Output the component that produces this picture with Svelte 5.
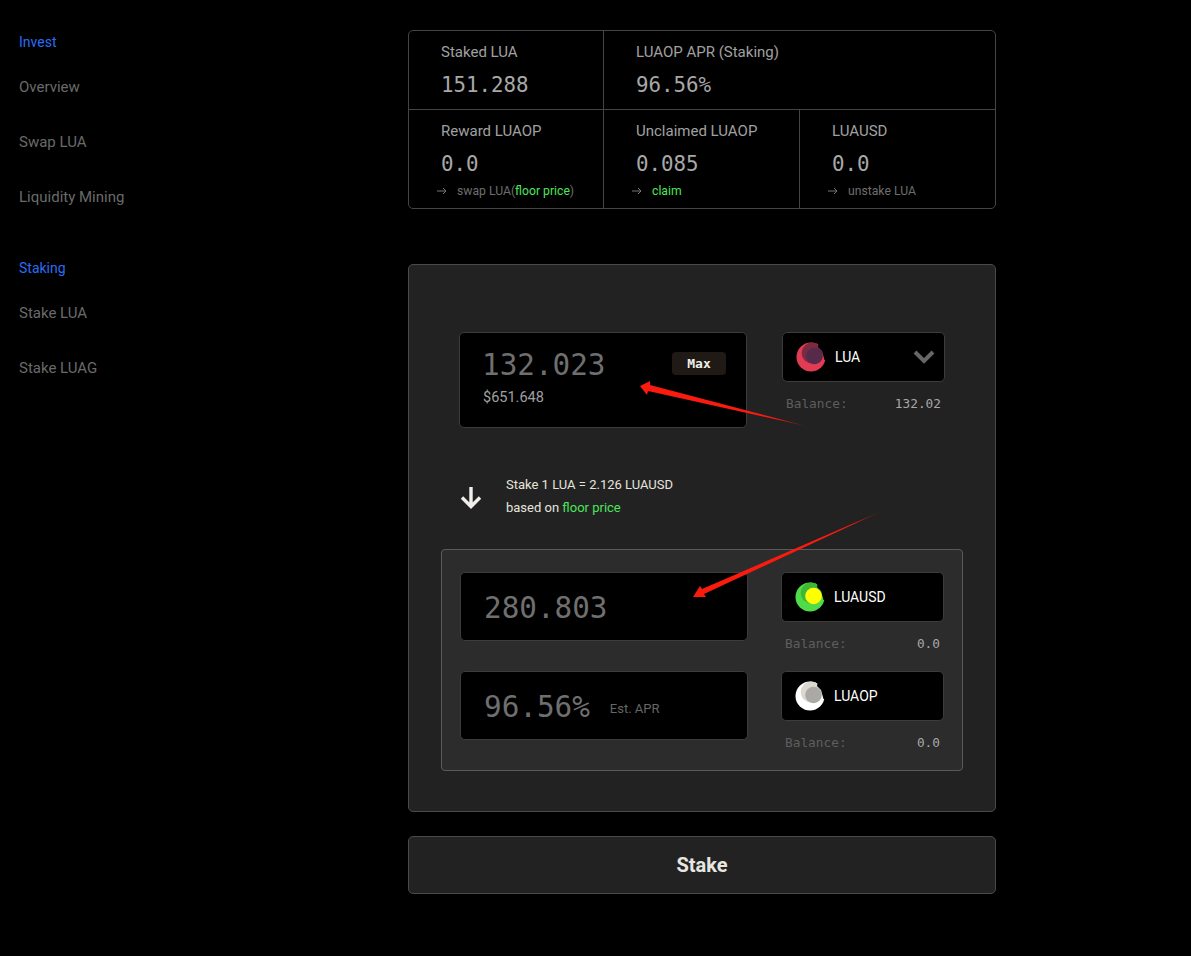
<script lang="ts">
  const sideGroups = [
    { title: 'Invest', links: ['Overview', 'Swap LUA', 'Liquidity Mining'] },
    { title: 'Staking', links: ['Stake LUA', 'Stake LUAG'] }
  ];
</script>

{#snippet coin(outer: string, top: string, inner: string)}
  <svg class="coin" width="30" height="30" viewBox="0 0 30 30">
    <circle cx="15" cy="15" r="14.5" fill={outer} />
    <circle cx="16" cy="11" r="10.4" fill={top} />
    <path d="M23 0 L30 0 L30 18 L28.5 18 L26 9 L22 5 Z" fill="#000" />
    <circle cx="18.5" cy="14" r="8.3" fill={inner} />
  </svg>
{/snippet}

{#snippet arrow()}
  <svg class="arr" width="10" height="8" viewBox="0 0 10 8">
    <path d="M0 4 H9 M6 1 L9 4 L6 7" fill="none" stroke="#777" stroke-width="1" />
  </svg>
{/snippet}

<div class="page">
  <nav class="side">
    {#each sideGroups as group}
      <div class="group">
        <div class="group-title">{group.title}</div>
        {#each group.links as link}
          <div class="side-link">{link}</div>
        {/each}
      </div>
    {/each}
  </nav>

  <main class="main">
    <section class="stats">
      <div class="stat wide-left">
        <div class="stat-label">Staked LUA</div>
        <div class="stat-value">151.288</div>
      </div>
      <div class="stat wide-right">
        <div class="stat-label">LUAOP APR (Staking)</div>
        <div class="stat-value">96.56%</div>
      </div>
      <div class="stat">
        <div class="stat-label">Reward LUAOP</div>
        <div class="stat-value">0.0</div>
        <div class="stat-link">{@render arrow()}swap LUA(<span class="green">floor price</span>)</div>
      </div>
      <div class="stat">
        <div class="stat-label">Unclaimed LUAOP</div>
        <div class="stat-value">0.085</div>
        <div class="stat-link">{@render arrow()}<span class="green">claim</span></div>
      </div>
      <div class="stat last">
        <div class="stat-label">LUAUSD</div>
        <div class="stat-value">0.0</div>
        <div class="stat-link">{@render arrow()}unstake LUA</div>
      </div>
    </section>

    <section class="panel">
      <div class="row from">
        <div class="input big">
          <div class="input-main">
            <span class="amount">132.023</span>
            <span class="max">Max</span>
          </div>
          <div class="usd">$651.648</div>
        </div>
        <div class="token-col">
          <div class="token">
            {@render coin('#e23c55', '#7c2a42', '#552a4a')}
            <span>LUA</span>
            <svg class="chev" width="22" height="14" viewBox="0 0 22 14">
              <path d="M2 2 L11 11 L20 2" fill="none" stroke="#666" stroke-width="4" />
            </svg>
          </div>
          <div class="balance"><span>Balance:</span><span class="bal-val">132.02</span></div>
        </div>
      </div>

      <div class="rate">
        <svg class="down" width="24" height="24" viewBox="0 0 24 24">
          <path d="M12 2 V21 M3 12.5 L12 21.5 L21 12.5" fill="none" stroke="#f0eeea" stroke-width="3.4" />
        </svg>
        <div class="rate-text">
          <div>Stake 1 LUA = 2.126 LUAUSD</div>
          <div>based on <span class="green">floor price</span></div>
        </div>
      </div>

      <div class="out">
        <div class="row">
          <div class="input small"><span class="amount">280.803</span></div>
          <div class="token-col">
            <div class="token">
              {@render coin('#4fdc48', '#3fb838', '#ffff00')}
              <span>LUAUSD</span>
            </div>
            <div class="balance"><span>Balance:</span><span class="bal-val">0.0</span></div>
          </div>
        </div>
        <div class="row">
          <div class="input small">
            <span class="amount">96.56%</span>
            <span class="est">Est. APR</span>
          </div>
          <div class="token-col">
            <div class="token">
              {@render coin('#ffffff', '#dcd8d0', '#aaa9a6')}
              <span>LUAOP</span>
            </div>
            <div class="balance"><span>Balance:</span><span class="bal-val">0.0</span></div>
          </div>
        </div>
      </div>
    </section>

    <button class="stake">Stake</button>
  </main>

  <!-- red annotation arrows pasted on top of the screenshot -->
  <svg class="marks" width="1191" height="956" viewBox="0 0 1191 956">
    <defs>
      <linearGradient id="fade1" gradientUnits="userSpaceOnUse" x1="640" y1="386" x2="808" y2="426">
        <stop offset="0.8" stop-color="#fb1a0e" />
        <stop offset="1" stop-color="#fb1a0e" stop-opacity="0.2" />
      </linearGradient>
      <linearGradient id="fade2" gradientUnits="userSpaceOnUse" x1="693" y1="597" x2="882" y2="511">
        <stop offset="0.85" stop-color="#fb1a0e" />
        <stop offset="1" stop-color="#fb1a0e" stop-opacity="0.3" />
      </linearGradient>
    </defs>
    <path d="M640 386 L650 381 L650 385 L808 426.5 L648 391 L647 395 Z" fill="url(#fade1)" />
    <path d="M693 597 L700 586 L702 589 L882 511 L704 594 L706 597 Z" fill="url(#fade2)" />
  </svg>
</div>

<style>
  :global(body) {
    background: #000;
  }

  .page {
    position: relative;
    display: flex;
    min-height: 956px;
    box-sizing: border-box;
    padding-top: 30px;
    background: #000;
    font-family: Roboto, "Liberation Sans", sans-serif;
    overflow: hidden;
  }

  .side {
    width: 408px;
    box-sizing: border-box;
    padding-left: 19px;
    flex-shrink: 0;
  }

  .group {
    margin-bottom: 15px;
  }

  .group-title {
    height: 24px;
    line-height: 24px;
    font-size: 14px;
    color: #2a6df4;
    margin-bottom: 22px;
  }

  .side-link {
    height: 55px;
    line-height: 22px;
    font-size: 15px;
    color: #6a6a6a;
  }

  .main {
    width: 588px;
  }

  .stats {
    display: grid;
    grid-template-columns: 195px 196px 1fr;
    grid-template-rows: 79px 1fr;
    border: 1px solid #444;
    border-radius: 5px;
    height: 179px;
    box-sizing: border-box;
  }

  .stat {
    box-sizing: border-box;
    padding: 11px 0 0 32px;
    border-right: 1px solid #444;
  }

  .wide-left {
    border-bottom: 1px solid #444;
  }

  .wide-right {
    grid-column: span 2;
    border-right: 0;
    border-bottom: 1px solid #444;
  }

  .last {
    border-right: 0;
  }

  .stat-label {
    font-size: 15px;
    line-height: 20px;
    color: #a0a0a0;
  }

  .stat-value {
    font-family: "DejaVu Sans Mono", "Liberation Mono", monospace;
    font-size: 20.8px;
    line-height: 28px;
    margin-top: 9px;
    color: #a8a8a8;
  }

  .stat-link {
    display: flex;
    align-items: center;
    font-size: 12.2px;
    line-height: 16px;
    margin-top: 5px;
    margin-left: -4px;
    color: #6e6e6e;
    white-space: pre;
  }

  .arr {
    margin-right: 10px;
    flex-shrink: 0;
  }

  .green {
    color: #4be65a;
  }

  .panel {
    margin-top: 55px;
    height: 548px;
    box-sizing: border-box;
    padding: 67px 32px 0 32px;
    background: #222;
    border: 1px solid #4a4a4a;
    border-radius: 5px;
  }

  .row {
    display: flex;
    justify-content: space-between;
  }

  .from {
    padding: 0 18px 0 18px;
  }

  .input {
    box-sizing: border-box;
    width: 288px;
    background: #000;
    border: 1px solid #3c3c3c;
    border-radius: 5px;
  }

  .big {
    height: 96px;
    padding: 15px 20px 0 22px;
  }

  .small {
    height: 69px;
    padding: 2px 23px 0;
    display: flex;
    align-items: center;
  }

  .input-main {
    display: flex;
    justify-content: space-between;
    align-items: flex-start;
  }

  .amount {
    font-family: "DejaVu Sans Mono", "Liberation Mono", monospace;
    font-size: 29.3px;
    line-height: 34px;
    color: #6f6f6f;
  }

  .max {
    box-sizing: border-box;
    width: 54px;
    height: 23px;
    margin-top: 4px;
    text-align: center;
    background: #1f1a16;
    border-radius: 4px;
    font-family: "DejaVu Sans Mono", "Liberation Mono", monospace;
    font-weight: 700;
    font-size: 13px;
    line-height: 23px;
    color: #f0eee8;
  }

  .usd {
    margin-top: 6px;
    margin-left: 1px;
    font-size: 14.5px;
    line-height: 20px;
    color: #a0a0a0;
  }

  .est {
    margin-left: 20px;
    font-size: 13px;
    color: #666;
    position: relative;
    top: 2px;
  }

  .token-col {
    width: 163px;
  }

  .token {
    box-sizing: border-box;
    height: 50px;
    display: flex;
    align-items: center;
    gap: 9px;
    padding-left: 13px;
    padding-right: 9px;
    background: #000;
    border: 1px solid #3c3c3c;
    border-radius: 5px;
    font-size: 14px;
    color: #fff;
  }

  .coin {
    flex-shrink: 0;
  }

  .chev {
    margin-left: auto;
  }

  .balance {
    display: flex;
    justify-content: space-between;
    padding: 0 4px;
    margin-top: 14px;
    font-family: "DejaVu Sans Mono", "Liberation Mono", monospace;
    font-size: 12.8px;
    line-height: 16px;
    color: #5e5e5e;
  }

  .bal-val {
    color: #a8a8a8;
  }

  .rate {
    display: flex;
    align-items: center;
    gap: 23px;
    height: 48px;
    margin-top: 44px;
    padding-left: 18px;
  }

  .down {
    margin-top: 2px;
  }

  .rate-text {
    font-size: 13px;
    line-height: 23px;
    color: #e6e4de;
  }

  .out {
    margin-top: 29px;
    height: 222px;
    box-sizing: border-box;
    padding: 22px 18px 0 18px;
    display: flex;
    flex-direction: column;
    gap: 19px;
    background: #2c2c2c;
    border: 1px solid #5a5a5a;
    border-radius: 4px;
  }

  .stake {
    display: block;
    width: 100%;
    height: 58px;
    margin-top: 24px;
    background: #222;
    border: 1px solid #4a4a4a;
    border-radius: 5px;
    font-family: Roboto, "Liberation Sans", sans-serif;
    font-weight: 700;
    font-size: 20px;
    color: #e8e6e0;
  }

  .marks {
    position: absolute;
    left: 0;
    top: 0;
    pointer-events: none;
  }
</style>
